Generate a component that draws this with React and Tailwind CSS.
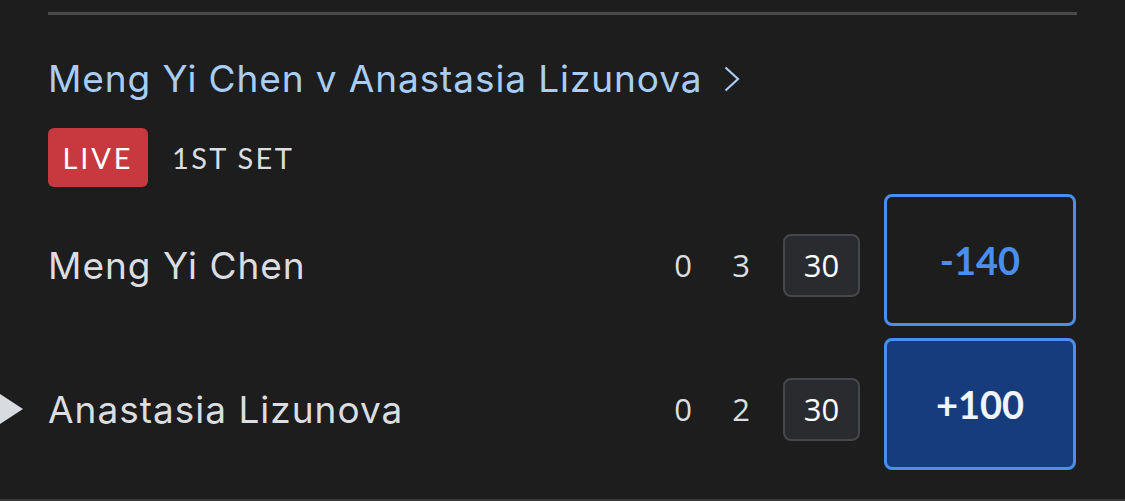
import React from "react";

const font = { fontFamily: "Inter, Lato, sans-serif" };
const lato = { fontFamily: "Lato, sans-serif" };
const digits = { fontFamily: "'Open Sans', sans-serif" };

function Row({ name, s1, s2, pts, odds, selected, serving }) {
  return (
    <div className="relative flex h-[132px] items-center">
      {serving && (
        <svg className="absolute left-[-48px] top-[56px]" width="24" height="32" viewBox="0 0 24 32">
          <polygon points="0,0 23,15 0,30" fill="#d8dbe0" />
        </svg>
      )}
      <div className="mt-[11px] flex flex-1 items-center">
        <div className="flex-1 text-[37px] leading-none tracking-[1px] text-[#dcdde0]" style={font}>
          {name}
        </div>
        <div className="w-[40px] text-center text-[31px] leading-none text-[#dcdde0]" style={digits}>{s1}</div>
        <div className="ml-[18px] w-[40px] text-center text-[31px] leading-none text-[#dcdde0]" style={digits}>{s2}</div>
        <div
          className="ml-[22px] flex h-[63px] w-[77px] items-center justify-center rounded-[8px] border-2 border-[#45474a] bg-[#2a2b2e] text-[31px] text-white"
          style={digits}
        >
          {pts}
        </div>
      </div>
      <div
        className={
          "ml-[24px] flex h-[132px] w-[192px] items-center justify-center rounded-[8px] border-[3px] border-[#4a8ef0] text-[38px] font-bold " +
          (selected ? "bg-[#173c7e] text-[#f0f4fb]" : "bg-[#1d1d1d] text-[#4a8ef0]")
        }
        style={lato}
      >
        {odds}
      </div>
    </div>
  );
}

export default function App() {
  return (
    <div className="h-[501px] w-[1125px] overflow-hidden border-b-2 border-[#3a3a3a] bg-[#1d1d1d]">
      <div className="px-[48px] pt-[12px]">
        <div className="h-[3px] bg-[#4a4a4a]" />
        <div className="mt-[44px] flex items-center gap-[22px]">
          <span className="text-[37px] leading-[40px] tracking-[0.9px] text-[#a9cdf5]" style={font}>
            Meng Yi Chen v Anastasia Lizunova
          </span>
          <svg width="16" height="26" viewBox="0 0 16 26">
            <polyline points="1.5,1.5 14,13 1.5,24.5" fill="none" stroke="#a9cdf5" strokeWidth="2.2" />
          </svg>
        </div>
        <div className="mt-[29px] flex items-center">
          <div
            className="flex h-[59px] w-[100px] items-center justify-center rounded-[6px] bg-[#c8393f] text-[29px] tracking-[0.1em] text-white"
            style={lato}
          >
            LIVE
          </div>
          <div className="ml-[24px] text-[29px] tracking-[0.08em] text-[#dcdde0]" style={lato}>
            1ST SET
          </div>
        </div>
        <div className="mt-[7px] flex flex-col gap-[12px] pr-[1px]">
          <Row name="Meng Yi Chen" s1="0" s2="3" pts="30" odds="-140" />
          <Row name="Anastasia Lizunova" s1="0" s2="2" pts="30" odds="+100" selected serving />
        </div>
      </div>
    </div>
  );
}
